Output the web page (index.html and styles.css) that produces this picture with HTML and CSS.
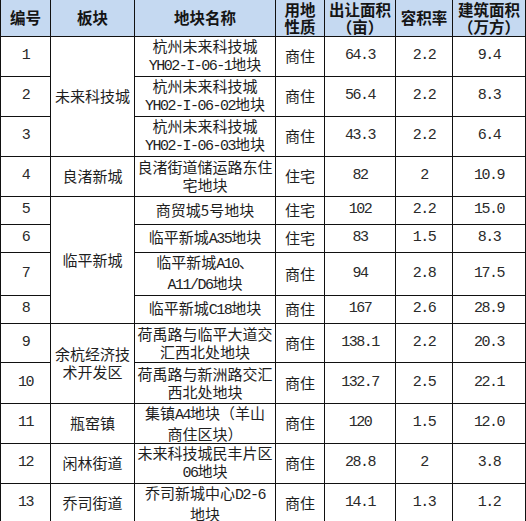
FILE: index.html
```html
<!DOCTYPE html>
<html lang="zh">
<head>
<meta charset="utf-8">
<link rel="stylesheet" href="styles.css">
</head>
<body>
<table class="land">
  <colgroup>
    <col class="c1"><col class="c2"><col class="c3"><col class="c4"><col class="c5"><col class="c6"><col class="c7">
  </colgroup>
  <thead>
    <tr class="h">
      <th>编号</th><th>板块</th><th>地块名称</th><th>用地<br>性质</th><th>出让面积<br>（亩）</th><th>容积率</th><th>建筑面积<br>（万方）</th>
    </tr>
  </thead>
  <tbody>
    <tr class="r2">
      <td class="n">1</td><td rowspan="3">未来科技城</td><td>杭州未来科技城<br><span class="m">YH02-I-06-1</span>地块</td><td>商住</td><td class="n">64.3</td><td class="n">2.2</td><td class="n">9.4</td>
    </tr>
    <tr class="r2">
      <td class="n">2</td><td>杭州未来科技城<br><span class="m">YH02-I-06-02</span>地块</td><td>商住</td><td class="n">56.4</td><td class="n">2.2</td><td class="n">8.3</td>
    </tr>
    <tr class="r2">
      <td class="n">3</td><td>杭州未来科技城<br><span class="m">YH02-I-06-03</span>地块</td><td>商住</td><td class="n">43.3</td><td class="n">2.2</td><td class="n">6.4</td>
    </tr>
    <tr class="r2">
      <td class="n">4</td><td>良渚新城</td><td>良渚街道储运路东住<br>宅地块</td><td>住宅</td><td class="n">82</td><td class="n">2</td><td class="n">10.9</td>
    </tr>
    <tr class="r1">
      <td class="n">5</td><td rowspan="4">临平新城</td><td>商贸城5号地块</td><td>住宅</td><td class="n">102</td><td class="n">2.2</td><td class="n">15.0</td>
    </tr>
    <tr class="r1">
      <td class="n">6</td><td>临平新城<span class="m">A35</span>地块</td><td>住宅</td><td class="n">83</td><td class="n">1.5</td><td class="n">8.3</td>
    </tr>
    <tr class="r2">
      <td class="n">7</td><td>临平新城<span class="m">A10</span>、<br><span class="m">A11/D6</span>地块</td><td>商住</td><td class="n">94</td><td class="n">2.8</td><td class="n">17.5</td>
    </tr>
    <tr class="r1">
      <td class="n">8</td><td>临平新城<span class="m">C18</span>地块</td><td>商住</td><td class="n">167</td><td class="n">2.6</td><td class="n">28.9</td>
    </tr>
    <tr class="r9">
      <td class="n">9</td><td rowspan="2">余杭经济技<br>术开发区</td><td>荷禹路与临平大道交<br>汇西北处地块</td><td>商住</td><td class="n">138.1</td><td class="n">2.2</td><td class="n">20.3</td>
    </tr>
    <tr class="r10">
      <td class="n">10</td><td>荷禹路与新洲路交汇<br>西北处地块</td><td>商住</td><td class="n">132.7</td><td class="n">2.5</td><td class="n">22.1</td>
    </tr>
    <tr class="r2">
      <td class="n">11</td><td>瓶窑镇</td><td>集镇<span class="m">A4</span>地块（羊山<br>商住区块）</td><td>商住</td><td class="n">120</td><td class="n">1.5</td><td class="n">12.0</td>
    </tr>
    <tr class="r2">
      <td class="n">12</td><td>闲林街道</td><td>未来科技城民丰片区<br><span class="m">06</span>地块</td><td>商住</td><td class="n">28.8</td><td class="n">2</td><td class="n">3.8</td>
    </tr>
    <tr class="r9">
      <td class="n">13</td><td>乔司街道</td><td>乔司新城中心<span class="m">D2-6</span><br>地块</td><td>商住</td><td class="n">14.1</td><td class="n">1.3</td><td class="n">1.2</td>
    </tr>
  </tbody>
</table>
</body>
</html>
```

FILE: styles.css
```css
html, body {
  margin: 0;
  padding: 0;
  background: #ffffff;
}

.land {
  border-collapse: collapse;
  table-layout: fixed;
  width: 525px;
  font-family: "Noto Sans CJK SC", "Noto Sans", sans-serif;
  font-size: 15px;
  line-height: 18px;
  color: #1e1e1e;
}

.c1 { width: 50px; }
.c2 { width: 84px; }
.c3 { width: 141px; }
.c4 { width: 49px; }
.c5 { width: 71px; }
.c6 { width: 57px; }
.c7 { width: 73px; }

.land th,
.land td {
  border: 1px solid #111;
  padding: 0;
  text-align: center;
  vertical-align: middle;
  white-space: nowrap;
  overflow: visible;
}

.land th {
  border-top: none;
  background: #c5d9f1;
  font-weight: 700;
  font-size: 15.5px;
  line-height: 17px;
  color: #151515;
}

.h { height: 36px; }
.r1 { height: 28px; }
.r2 { height: 40px; }
.r9 { height: 39px; }
.r10 { height: 41px; }

.land td.n {
  font-family: "Liberation Mono", monospace;
  letter-spacing: -1.5px;
  color: #2a2a2a;
}

.m {
  font-family: "Liberation Mono", monospace;
  letter-spacing: -1.5px;
}
```
